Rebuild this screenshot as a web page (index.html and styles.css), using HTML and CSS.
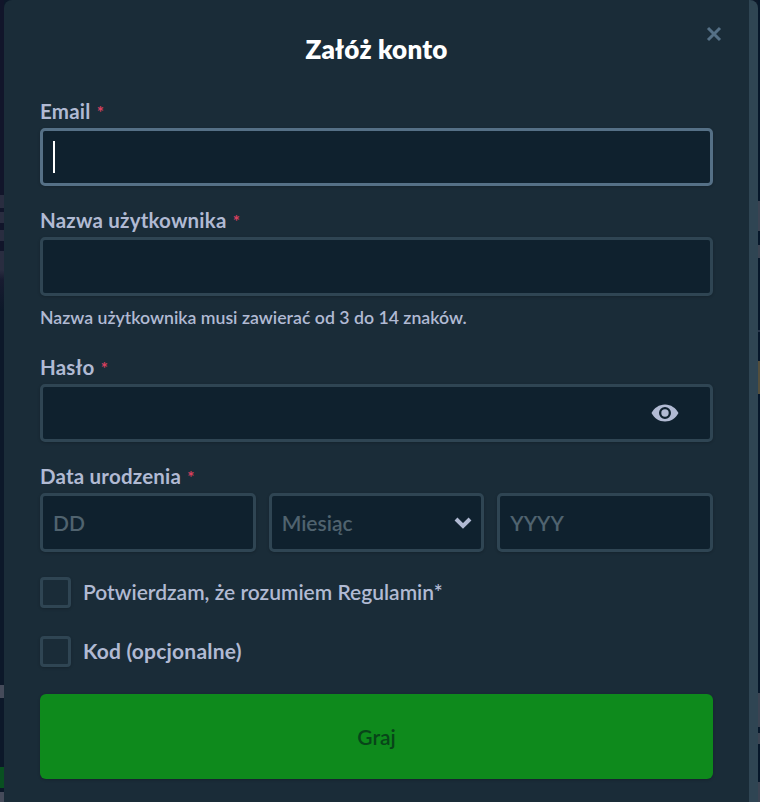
FILE: index.html
```html
<!DOCTYPE html>
<html lang="pl">
<head>
    <meta charset="UTF-8">
    <meta name="viewport" content="width=device-width, initial-scale=1.0">
    <title>Załóż konto</title>
    <link rel="stylesheet" href="styles.css">
</head>
<body>
    <div class="page-left"></div>
    <main class="modal">
        <button class="close" type="button" aria-label="Zamknij">
            <svg width="16" height="16" viewBox="0 0 16 16"><path d="M2 2l12 12M14 2L2 14"/></svg>
        </button>
        <h1>Załóż konto</h1>
        <form>
            <div class="field">
                <label>Email <span class="required">*</span></label>
                <div class="input focused"><span class="caret"></span></div>
            </div>
            <div class="field username">
                <label>Nazwa użytkownika <span class="required">*</span></label>
                <div class="input tall"></div>
                <p class="hint">Nazwa użytkownika musi zawierać od 3 do 14 znaków.</p>
            </div>
            <div class="field">
                <label>Hasło <span class="required">*</span></label>
                <div class="input password">
                    <svg class="eye" width="28" height="18" viewBox="0 0 28 18">
                        <path fill-rule="evenodd" d="M14 .5C8 .5 3.200 4 .5 9c2.700 5 7.500 8.500 13.500 8.500S24.800 14 27.500 9C24.800 4 20 .5 14 .5zM14 3a6 6 0 1 1 0 12a6 6 0 0 1 0-12z"/>
                        <circle cx="14" cy="9" r="3.700"/>
                    </svg>
                </div>
            </div>
            <div class="field">
                <label>Data urodzenia <span class="required">*</span></label>
                <div class="date-row">
                    <div class="input tall">DD</div>
                    <div class="input tall select">
                        <span>Miesiąc</span>
                        <svg width="18" height="12" viewBox="0 0 18 12"><path d="M2 2l7 7 7-7"/></svg>
                    </div>
                    <div class="input tall">YYYY</div>
                </div>
            </div>
            <div class="check-row">
                <span class="checkbox"></span>
                <span>Potwierdzam, że rozumiem Regulamin*</span>
            </div>
            <div class="check-row code-row">
                <span class="checkbox"></span>
                <span>Kod (opcjonalne)</span>
            </div>
            <button class="submit" type="button">Graj</button>
        </form>
    </main>
    <div class="scrollbar"></div>
    <div class="page-right"></div>
</body>
</html>
```

FILE: styles.css
```css
* {
    box-sizing: border-box;
}

body {
    margin: 0;
    height: 802px;
    display: grid;
    grid-template-columns: 4px 745px 9px 2px;
    overflow: hidden;
    background-color: #0c1829;
    color: #b1bad3;
    font-family: Lato, "Liberation Sans", sans-serif;
    font-size: 21px;
    font-weight: 600;
    line-height: 24px;
}

/* dimmed page content on both sides of the modal */
.page-left {
    background: linear-gradient(#11152a 195px, #292d40 195px 208px, #11152a 208px 212px, #292d40 212px 223px, #11152a 223px 230px, #292d40 230px 241px, #11152a 241px 251px, #292d40 251px 270px, #171b30 280px, #0c1829 310px 685px, #454b5a 685px 698px, #0c1829 698px 767px, #095021 767px 788px, #0c1829 788px 792px, #454b5a 792px);
}

.page-right {
    background: linear-gradient(#07172a 201px, #3b4352 201px 231px, #07172a 231px 245px, #3b4352 245px 258px, #07172a 258px 330px, #28364a 330px 332px, #07172a 332px 361px, #554f3c 361px 394px, #07172a 394px 693px, #3b4352 693px 727px, #07172a 727px 733px, #3b4352 733px 744px, #07172a 744px 782px, #3b4352 782px);
}

.modal {
    position: relative;
    padding: 0 36px;
    background-color: #1a2c38;
    border-top-left-radius: 8px;
}

.close {
    position: absolute;
    top: 26px;
    right: 27px;
    width: 16px;
    height: 16px;
    padding: 0;
    border: 0;
    background: none;
}

.close svg {
    display: block;
    fill: none;
    stroke: #557086;
    stroke-width: 3;
}

h1 {
    margin: 0;
    padding: 34px 0 35px;
    color: #fff;
    font-size: 26px;
    font-weight: 800;
    letter-spacing: 0.2px;
    line-height: 30px;
    text-align: center;
}

form {
    width: 673px;
}

.field {
    margin-bottom: 22px;
}

.username {
    margin-bottom: 25px;
}

label {
    display: block;
    height: 29px;
    font-size: 20.5px;
    font-weight: 700;
    letter-spacing: 0.2px;
    line-height: 25px;
}

.required {
    margin-left: 1px;
    color: #d8405f;
    font-size: 17px;
}

.input {
    display: flex;
    align-items: center;
    height: 58px;
    padding: 0 10px;
    border: 3px solid #2f4553;
    border-radius: 5px;
    background-color: #0f212e;
    box-shadow: 0 1px 3px rgba(0, 0, 0, 0.2);
    color: #50636f;
}

.input.tall {
    height: 59px;
}

.input.focused {
    border-color: #557086;
}

.caret {
    width: 2px;
    height: 32px;
    background-color: #fff;
}

.hint {
    margin: 10px 0 0;
    font-size: 17.7px;
}

.password {
    justify-content: flex-end;
    padding-right: 31px;
}

.eye {
    fill: #b1bad3;
}

.date-row {
    display: grid;
    grid-template-columns: repeat(3, 1fr);
    gap: 13px;
    margin-bottom: 24px;
}

.select {
    justify-content: space-between;
    padding-right: 9px;
}

.select svg {
    fill: none;
    stroke: #b1bad3;
    stroke-width: 4;
}

.check-row {
    display: flex;
    align-items: center;
    gap: 12px;
    height: 32px;
    margin-bottom: 27px;
}

.code-row {
    font-weight: 700;
    letter-spacing: 0.2px;
}

.checkbox {
    width: 31px;
    height: 31px;
    border: 3px solid #2f4553;
    border-radius: 4px;
    box-shadow: 0 1px 3px rgba(0, 0, 0, 0.2);
}

.submit {
    display: block;
    width: 100%;
    height: 85px;
    border: 0;
    border-radius: 6px;
    background-color: #0e8a1c;
    color: #084519;
    font: inherit;
    box-shadow: 0 1px 3px rgba(0, 0, 0, 0.2);
}

.scrollbar {
    background-color: #2f4553;
    border-top-right-radius: 8px;
}
```
